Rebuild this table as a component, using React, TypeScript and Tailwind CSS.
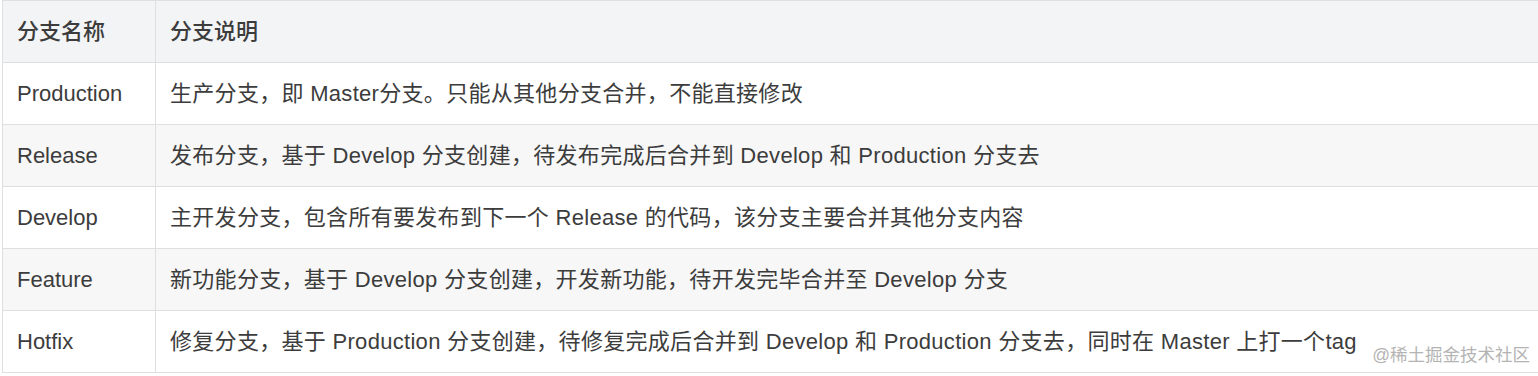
import React from "react";

const rows: [string, string][] = [
  ["Production", "生产分支，即 Master分支。只能从其他分支合并，不能直接修改"],
  ["Release", "发布分支，基于 Develop 分支创建，待发布完成后合并到 Develop 和 Production 分支去"],
  ["Develop", "主开发分支，包含所有要发布到下一个 Release 的代码，该分支主要合并其他分支内容"],
  ["Feature", "新功能分支，基于 Develop 分支创建，开发新功能，待开发完毕合并至 Develop 分支"],
  ["Hotfix", "修复分支，基于 Production 分支创建，待修复完成后合并到 Develop 和 Production 分支去，同时在 Master 上打一个tag"],
];

export default function App() {
  return (
    <div
      className="relative w-[1538px] h-[376px] overflow-hidden bg-white pl-[2px]"
      style={{ fontFamily: '"Liberation Sans", "Noto Sans CJK SC", sans-serif' }}
    >
      <table className="w-[1560px] border-collapse text-[22px] text-[#3c3c3c] leading-none">
        <thead>
          <tr className="bg-[#f3f4f5] h-[62px]">
            <th className="w-[153px] border border-[#dfdfdf] px-[14px] text-left font-medium">分支名称</th>
            <th className="border border-[#dfdfdf] px-[14px] text-left font-medium">分支说明</th>
          </tr>
        </thead>
        <tbody>
          {rows.map(([name, desc], i) => (
            <tr key={name} className={`h-[62px] ${i % 2 === 1 ? "bg-[#f7f7f7]" : "bg-white"}`}>
              <td className="border border-[#dfdfdf] px-[14px]">{name}</td>
              <td className="border border-[#dfdfdf] px-[14px] whitespace-nowrap tracking-[0.3px]">{desc}</td>
            </tr>
          ))}
        </tbody>
      </table>
      <div className="absolute right-[8px] top-[347px] text-[17.5px] leading-none text-[#b4b4b4]">
        @稀土掘金技术社区
      </div>
    </div>
  );
}
